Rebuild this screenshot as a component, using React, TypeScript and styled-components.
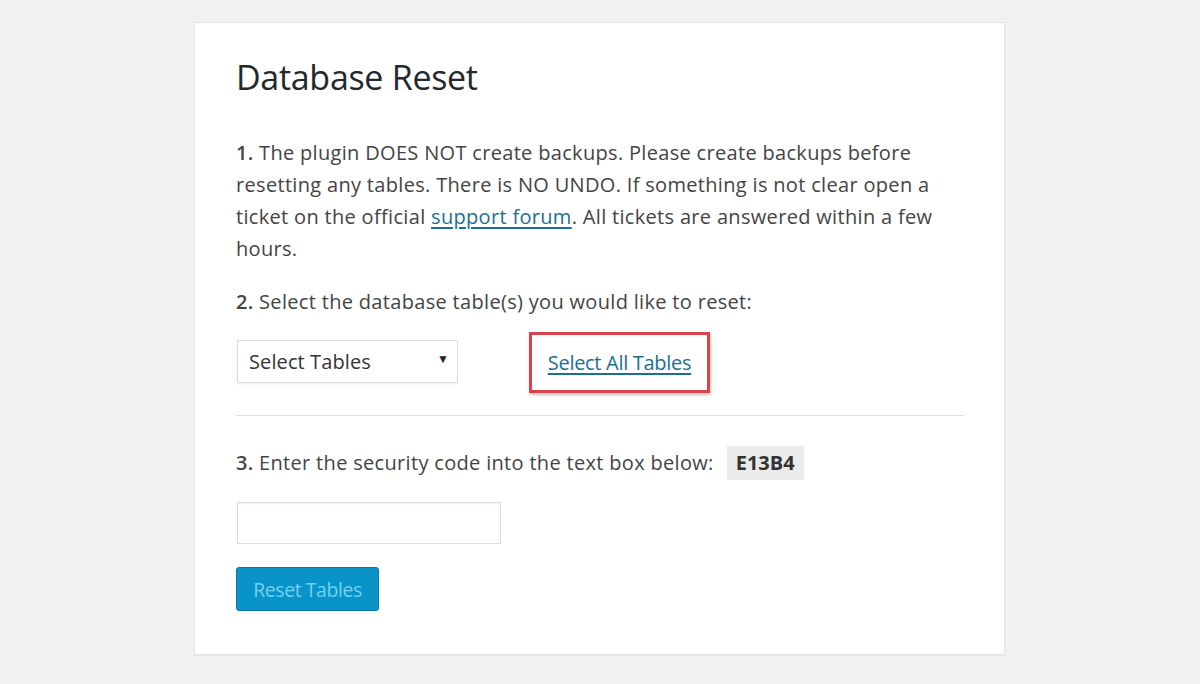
import React from "react";
import styled, { createGlobalStyle } from "styled-components";

const Global = createGlobalStyle`
  html, body { margin: 0; padding: 0; background: #f1f1f1; }
  body { font-family: "Open Sans", "Noto Sans", sans-serif; color: #444; }
`;

const Page = styled.div`
  display: flex;
  justify-content: center;
  padding-top: 22px;
  height: 684px;
  box-sizing: border-box;
`;

const Card = styled.div`
  width: 811px;
  height: 633px;
  box-sizing: border-box;
  background: #fff;
  border: 1px solid #e3e3e3;
  box-shadow: 0 1px 1px rgba(0,0,0,0.04);
  padding: 32px 40px 0 41px;
  margin-left: -1px;
`;

const Title = styled.h1`
  margin: 0 0 38px;
  font-size: 34px;
  font-weight: 400;
  color: #23282d;
  line-height: 44px;
  letter-spacing: -0.3px;
`;

const Para = styled.p<{ $gap?: number }>`
  margin: ${(p) => p.$gap ?? 0}px 0 0;
  font-size: 20px;
  line-height: 32px;
  letter-spacing: 0.32px;
  color: #444;
  max-width: 712px;
`;

const Num = styled.b`
  font-weight: 600;
  color: #444;
`;

const Link = styled.a`
  color: #1a6f96;
  text-decoration: underline;
  text-underline-offset: 3px;
`;

const SelectRow = styled.div`
  display: flex;
  align-items: center;
  margin-top: 12px;
  gap: 71px;
`;

const FakeSelect = styled.div`
  width: 221px;
  height: 43px;
  box-sizing: border-box;
  border: 1px solid #ddd;
  box-shadow: 0 1px 2px rgba(0,0,0,0.07);
  display: flex;
  align-items: center;
  justify-content: space-between;
  padding: 0 8px 0 11px;
  font-size: 20px;
  letter-spacing: 0.1px;
  color: #333;
  margin-left: 1px;
`;

const Arrow = styled.span`
  font-size: 12px;
  color: #222;
  margin-top: -6px;
`;

const Highlight = styled.div`
  width: 181px;
  height: 61px;
  box-sizing: border-box;
  border: 3px solid #d9444b;
  box-shadow: 1px 2px 3px rgba(0,0,0,0.25);
  display: flex;
  align-items: center;
  justify-content: center;
  margin-top: 2px;
`;

const HighlightLink = styled(Link)`
  font-size: 20px;
  letter-spacing: -0.3px;
`;

const Divider = styled.hr`
  border: 0;
  border-top: 1px solid #e1e1e1;
  margin: 22px 0 0;
  width: 728px;
`;

const CodeRow = styled.div`
  display: flex;
  align-items: center;
  margin-top: 30px;
  gap: 13px;
`;

const Code = styled.span`
  background: #ebebeb;
  font-weight: 700;
  font-size: 20px;
  letter-spacing: 0;
  color: #333;
  padding: 0 9px;
  line-height: 34px;
`;

const Input = styled.input`
  display: block;
  margin-top: 22px;
  margin-left: 1px;
  width: 264px;
  height: 42px;
  box-sizing: border-box;
  border: 1px solid #ddd;
  box-shadow: inset 0 1px 2px rgba(0,0,0,0.07);
  outline: none;
`;

const Button = styled.button`
  margin-top: 23px;
  width: 143px;
  height: 44px;
  box-sizing: border-box;
  background: #0894c8;
  border: 1px solid #0a78a6;
  border-radius: 3px;
  color: #71d1f2;
  font-family: "Open Sans", sans-serif;
  font-size: 19.4px;
  letter-spacing: -0.4px;
  cursor: default;
`;

export default function App() {
  return (
    <>
      <Global />
      <Page>
        <Card>
          <Title>Database Reset</Title>
          <Para>
            <Num>1.</Num> The plugin DOES NOT create backups. Please create backups before
            resetting any tables. There is NO UNDO. If something is not clear open a
            ticket on the official <Link href="#">support forum</Link>. All tickets are answered within a few
            hours.
          </Para>
          <Para $gap={21}>
            <Num>2.</Num> Select the database table(s) you would like to reset:
          </Para>
          <SelectRow>
            <FakeSelect>
              <span>Select Tables</span>
              <Arrow>▼</Arrow>
            </FakeSelect>
            <Highlight>
              <HighlightLink href="#">Select All Tables</HighlightLink>
            </Highlight>
          </SelectRow>
          <Divider />
          <CodeRow>
            <Para>
              <Num>3.</Num> Enter the security code into the text box below:
            </Para>
            <Code>E13B4</Code>
          </CodeRow>
          <Input type="text" />
          <Button disabled>Reset Tables</Button>
        </Card>
      </Page>
    </>
  );
}
